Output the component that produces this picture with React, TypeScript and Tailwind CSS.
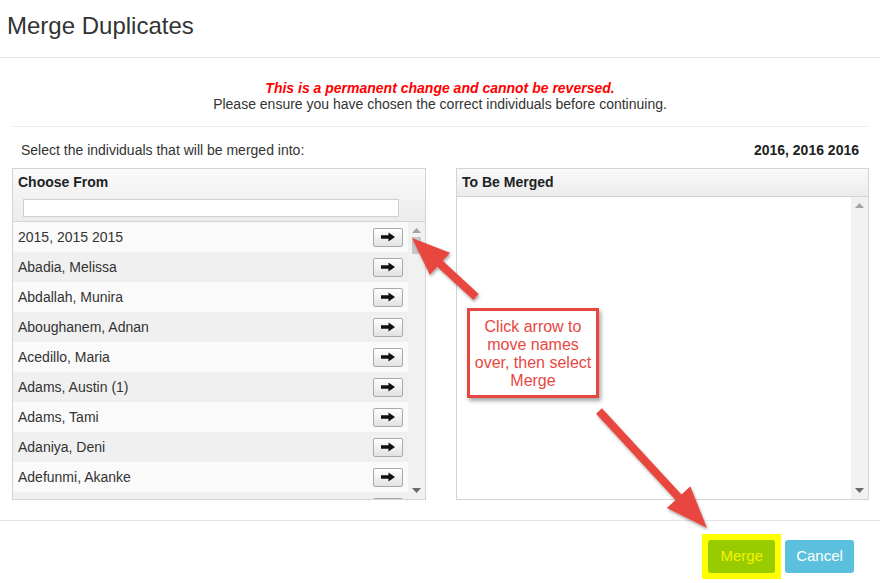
import React from "react";

const names = [
  "2015, 2015 2015",
  "Abadia, Melissa",
  "Abdallah, Munira",
  "Aboughanem, Adnan",
  "Acedillo, Maria",
  "Adams, Austin (1)",
  "Adams, Tami",
  "Adaniya, Deni",
  "Adefunmi, Akanke",
  "",
];

function arrowPath(x1: number, y1: number, x2: number, y2: number, shaft: number, headLen: number, headW: number) {
  const dx = x2 - x1;
  const dy = y2 - y1;
  const len = Math.sqrt(dx * dx + dy * dy);
  const ux = dx / len;
  const uy = dy / len;
  const nx = -uy;
  const ny = ux;
  const bx = x2 - ux * headLen;
  const by = y2 - uy * headLen;
  const s = shaft / 2;
  const h = headW / 2;
  const p = [
    [x1 + nx * s, y1 + ny * s],
    [bx + nx * s, by + ny * s],
    [bx + nx * h, by + ny * h],
    [x2, y2],
    [bx - nx * h, by - ny * h],
    [bx - nx * s, by - ny * s],
    [x1 - nx * s, y1 - ny * s],
  ];
  return "M" + p.map((q) => q[0].toFixed(1) + " " + q[1].toFixed(1)).join(" L") + " Z";
}

function RowButton() {
  return (
    <button className="w-[30px] h-[19px] flex items-center justify-center rounded-[2px] border border-[#a9a9a9] bg-gradient-to-b from-white to-[#e2e2e2]">
      <svg width="16" height="10" viewBox="0 0 16 10">
        <path d="M1 3.2 H8.5 V0.5 L15 5 L8.5 9.5 V6.8 H1 Z" fill="#111" />
      </svg>
    </button>
  );
}

function Scrollbar({ thumb }: { thumb?: boolean }) {
  return (
    <div className="w-[17px] bg-[#f1f1f1] flex flex-col items-center justify-between py-[6px]">
      <div className="flex flex-col items-center">
        <svg width="9" height="5" viewBox="0 0 9 5">
          <path d="M0 5 L4.5 0 L9 5 Z" fill="#a3a3a3" />
        </svg>
        {thumb && <div className="mt-[4px] w-[9px] h-[17px] bg-[#c8c8c8]" />}
      </div>
      <svg width="9" height="5" viewBox="0 0 9 5">
        <path d="M0 0 L4.5 5 L9 0 Z" fill="#6a6a6a" />
      </svg>
    </div>
  );
}

function PanelHeader({ title, children }: { title: string; children?: React.ReactNode }) {
  return (
    <div className="bg-gradient-to-b from-[#fafafa] to-[#ececec] border-b border-[#d3d3d3] px-[5px] pt-[5px]">
      <div className="text-[14px] font-bold text-[#222] leading-[16px]">{title}</div>
      {children}
    </div>
  );
}

export default function App() {
  return (
    <div
      className="relative w-[880px] h-[583px] bg-white text-[#333] overflow-hidden"
      style={{ fontFamily: '"Liberation Sans", Arial, sans-serif' }}
    >
      <div className="h-[58px] border-b border-[#e5e5e5] px-[7px] pt-[12px]">
        <h1 className="text-[24px] leading-[28px] text-[#333]">Merge Duplicates</h1>
      </div>

      <div className="px-[12px]">
        <div className="text-center text-[14px] leading-[16px] pt-[22px] pb-[14px] border-b border-[#eeeeee]">
          <div className="text-[#ff0000] font-bold italic">This is a permanent change and cannot be reversed.</div>
          <div className="text-[#333]">Please ensure you have chosen the correct individuals before continuing.</div>
        </div>

        <div className="flex justify-between text-[14px] leading-[16px] pt-[15px] pb-[10px] pl-[9px] pr-[9px]">
          <span>Select the individuals that will be merged into:</span>
          <span className="font-bold text-[#222]">2016, 2016 2016</span>
        </div>

        <div className="grid grid-cols-[414px_414px] gap-[30px]">
          <div className="border border-[#d3d3d3] h-[332px] flex flex-col">
            <PanelHeader title="Choose From">
              <div className="pt-[9px] pb-[4px] pl-[5px]">
                <input className="block w-[376px] h-[18px] border border-[#cfcfcf] bg-white outline-none" />
              </div>
            </PanelHeader>
            <div className="flex flex-1 min-h-0">
              <div className="flex-1 overflow-hidden">
                {names.map((n, i) => (
                  <div
                    key={i}
                    className={
                      "h-[30px] flex items-center justify-between pl-[5px] pr-[5px] text-[14px] " +
                      (i % 2 === 0 ? "bg-[#fafafa]" : "bg-[#f0f0f0]")
                    }
                  >
                    <span className="text-[#333]">{n}</span>
                    <RowButton />
                  </div>
                ))}
              </div>
              <Scrollbar thumb />
            </div>
          </div>

          <div className="border border-[#d3d3d3] h-[332px] flex flex-col w-[413px]">
            <PanelHeader title="To Be Merged">
              <div className="h-[6px]" />
            </PanelHeader>
            <div className="flex flex-1">
              <div className="flex-1 bg-white" />
              <Scrollbar />
            </div>
          </div>
        </div>
      </div>

      <div className="mt-[20px] border-t border-[#e5e5e5] flex justify-end items-center gap-[4px] pr-[26px] pt-[13px]">
        <div className="bg-[#ffff00] p-[6px]">
          <button className="h-[33px] px-[12px] rounded-[3px] bg-[#99cc00] text-[#f2f200] text-[15px]">Merge</button>
        </div>
        <button className="h-[33px] w-[69px] rounded-[3px] bg-[#5bc0de] text-white text-[15px]">Cancel</button>
      </div>

      <svg className="absolute inset-0 pointer-events-none" width="880" height="583" viewBox="0 0 880 583">
        <defs>
          <filter id="sh" x="-20%" y="-20%" width="140%" height="140%">
            <feDropShadow dx="1" dy="2" stdDeviation="1.5" floodColor="#000" floodOpacity="0.35" />
          </filter>
        </defs>
        <g filter="url(#sh)" fill="#e8473f" strokeLinejoin="round">
          <path d={arrowPath(476, 297, 412, 238, 8, 38, 30)} />
          <path d={arrowPath(599, 411, 707, 528, 8, 42, 32)} />
        </g>
      </svg>

      <div className="absolute left-[467px] top-[308px] w-[132px] h-[90px] border-[3px] border-[#e8473f] bg-white shadow-[2px_3px_4px_rgba(0,0,0,0.35)] flex items-center justify-center text-center text-[16px] leading-[18px] text-[#e8473f] px-[4px] pt-[2px]">
        Click arrow to move names over, then select Merge
      </div>
    </div>
  );
}
